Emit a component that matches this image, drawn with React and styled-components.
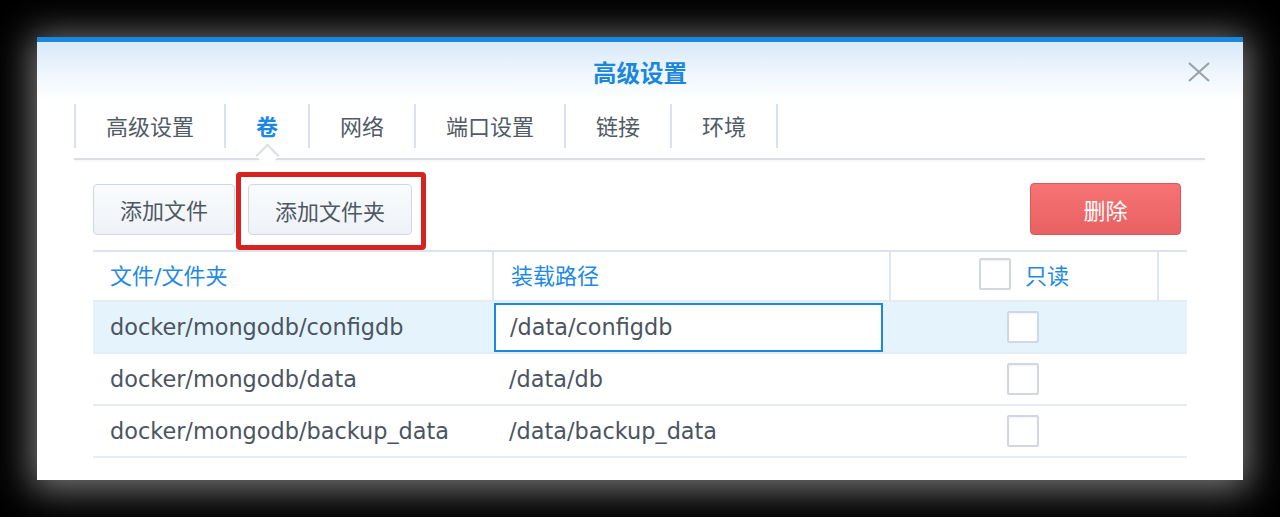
import styled, { createGlobalStyle } from "styled-components";

const GlobalStyle = createGlobalStyle`
  html, body {
    margin: 0;
    padding: 0;
    background: #000;
    height: 517px;
    overflow: hidden;
  }
  body {
    font-family: "DejaVu Sans", "Noto Sans CJK SC", sans-serif;
  }
`;

const Page = styled.div`
  padding: 37px 37px 0 37px;
`;

const Dialog = styled.div`
  width: 1206px;
  height: 443px;
  box-sizing: border-box;
  border-top: 5px solid #1b88e0;
  background: linear-gradient(#d8e9f8 0, #eef6fd 30px, #ffffff 60px);
  box-shadow: 0 4px 34px 6px rgba(140, 140, 140, 0.85);
  display: flex;
  flex-direction: column;
`;

const Header = styled.div`
  display: grid;
  grid-template-columns: 1fr auto 1fr;
  align-items: center;
  height: 62px;
`;

const Title = styled.div`
  grid-column: 2;
  font-family: "Noto Sans CJK SC", sans-serif;
  font-size: 23.5px;
  font-weight: 700;
  color: #1a87dd;
  margin-top: -3px;
`;

const Close = styled.button`
  grid-column: 3;
  justify-self: end;
  margin-right: 32px;
  margin-top: -3px;
  width: 24px;
  height: 22px;
  padding: 0;
  border: none;
  background: transparent;
  display: flex;
  align-items: center;
  justify-content: center;
`;

const TabBar = styled.div`
  margin: 0 38px 0 37px;
  height: 54px;
  border-bottom: 2px solid #dcdfe2;
  box-shadow: 0 2px 2px rgba(0, 0, 0, 0.03);
  display: flex;
  align-items: flex-start;
`;

const Tab = styled.div`
  position: relative;
  height: 44px;
  box-sizing: border-box;
  padding: 0 30px 3px 30px;
  display: flex;
  align-items: center;
  font-family: "Noto Sans CJK SC", sans-serif;
  font-size: 22px;
  font-weight: ${(p) => (p.$active ? 700 : 400)};
  color: ${(p) => (p.$active ? "#1a88e2" : "#515b66")};
  border-right: 2px solid #d8e1ec;
  &:first-child {
    border-left: 2px solid #d8e1ec;
  }
`;

const Notch = styled.span`
  position: absolute;
  left: 50%;
  bottom: -16px;
  width: 15px;
  height: 15px;
  margin-left: -8px;
  background: #fff;
  border-top: 2px solid #dcdfe2;
  border-left: 2px solid #dcdfe2;
  transform: rotate(45deg);
`;

const Content = styled.div`
  padding: 23px 56px 0 56px;
  display: flex;
  flex-direction: column;
`;

const Toolbar = styled.div`
  display: flex;
  align-items: center;
  gap: 13px;
  height: 52px;
`;

const Button = styled.button`
  height: 51px;
  padding: 0 26px;
  box-sizing: border-box;
  border: 1.5px solid #cfd8e2;
  border-radius: 4px;
  background: linear-gradient(#f9fbfd, #eef2f7);
  font-family: "Noto Sans CJK SC", sans-serif;
  font-size: 22px;
  color: #4f5862;
`;

const Highlight = styled.div`
  border: 5px solid #d82222;
  border-radius: 4px;
  padding: 7px 9px 10px 7px;
  margin: -8px -14px -12px -12px;
  display: flex;
`;

const DeleteButton = styled.button`
  margin-left: auto;
  margin-right: 6px;
  width: 151px;
  height: 52px;
  box-sizing: border-box;
  border: 1.5px solid #d9585a;
  border-radius: 4px;
  background: linear-gradient(#f67373, #e86163);
  font-family: "Noto Sans CJK SC", sans-serif;
  font-size: 22px;
  color: #ffffff;
`;

const Table = styled.div`
  margin-top: 15px;
  display: grid;
  grid-template-columns: 399px 397px 268px 30px;
  border-top: 2px solid #dae4ee;
`;

const HeadCell = styled.div`
  height: 48px;
  box-sizing: border-box;
  padding-bottom: 4px;
  display: flex;
  align-items: center;
  justify-content: ${(p) => (p.$center ? "center" : "flex-start")};
  gap: 14px;
  padding-left: ${(p) => (p.$center ? 0 : 17)}px;
  font-family: "DejaVu Sans", "Noto Sans CJK SC", sans-serif;
  font-size: 22px;
  color: #1e8ae4;
  border-left: ${(p) => (p.$sep ? "2px solid #dde7f1" : "none")};
`;

const Cell = styled.div`
  height: 50px;
  display: flex;
  align-items: center;
  justify-content: ${(p) => (p.$center ? "center" : "flex-start")};
  padding-left: ${(p) => (p.$center ? 0 : 17)}px;
  font-size: 22.4px;
  color: #4a5561;
  background: ${(p) => (p.$selected ? "#e5f3fd" : "#fff")};
  border-bottom: 2px solid #e6ecf2;
  ${(p) => p.$topLine && "border-top: 2px solid #e6ecf2;"}
`;

const Input = styled.input`
  width: 389px;
  height: 49px;
  box-sizing: border-box;
  margin-left: -15px;
  padding: 0 0 0 14px;
  border: 2px solid #1a88e2;
  background: #fff;
  font-family: "DejaVu Sans", sans-serif;
  font-size: 22.4px;
  color: #4a5561;
  outline: none;
`;

const Check = styled.span`
  display: inline-block;
  width: 32px;
  height: 32px;
  box-sizing: border-box;
  border: 2px solid #d1d8e0;
  border-radius: 2px;
  background: #fff;
  box-shadow: inset 0 1px 2px rgba(0, 0, 0, 0.06);
`;

const rows = [
  { file: "docker/mongodb/configdb", path: "/data/configdb", selected: true },
  { file: "docker/mongodb/data", path: "/data/db" },
  { file: "docker/mongodb/backup_data", path: "/data/backup_data" },
];

const tabs = ["高级设置", "卷", "网络", "端口设置", "链接", "环境"];

export default function App() {
  return (
    <Page>
      <GlobalStyle />
      <Dialog>
        <Header>
          <Title>高级设置</Title>
          <Close aria-label="close">
            <svg width="24" height="20" viewBox="0 0 24 20">
              <path
                d="M2 1 L22 19 M22 1 L2 19"
                stroke="#9aa2ab"
                strokeWidth="2.2"
                fill="none"
              />
            </svg>
          </Close>
        </Header>

        <TabBar>
          {tabs.map((t) => (
            <Tab key={t} $active={t === "卷"}>
              {t}
              {t === "卷" && <Notch />}
            </Tab>
          ))}
        </TabBar>

        <Content>
          <Toolbar>
            <Button>添加文件</Button>
            <Highlight>
              <Button>添加文件夹</Button>
            </Highlight>
            <DeleteButton>删除</DeleteButton>
          </Toolbar>

          <Table>
            <HeadCell>文件/文件夹</HeadCell>
            <HeadCell $sep>装载路径</HeadCell>
            <HeadCell $sep $center>
              <Check />
              只读
            </HeadCell>
            <HeadCell $sep />
            {rows.map((r) => (
              <>
                <Cell $selected={r.selected} $topLine={r.selected}>{r.file}</Cell>
                <Cell $selected={r.selected} $topLine={r.selected}>
                  {r.selected ? <Input defaultValue={r.path} /> : r.path}
                </Cell>
                <Cell $selected={r.selected} $topLine={r.selected} $center>
                  <Check />
                </Cell>
                <Cell $selected={r.selected} $topLine={r.selected} />
              </>
            ))}
          </Table>
        </Content>
      </Dialog>
    </Page>
  );
}
